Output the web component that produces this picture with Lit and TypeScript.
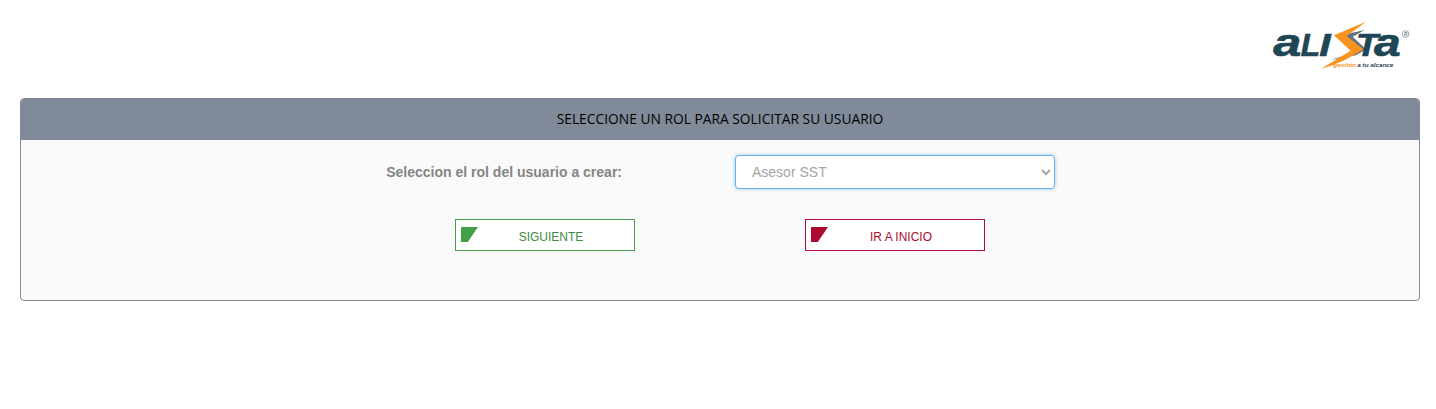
import { LitElement, html, css } from "lit";
import { customElement } from "lit/decorators.js";

@customElement("app-root")
export class AppRoot extends LitElement {
  static styles = css`
    :host { display: block; background: #fff; min-height: 409px; font-family: "Liberation Sans", Arial, sans-serif; }
    .top { display: flex; justify-content: flex-end; padding: 10px 10px 18px 0; }
    .logo { display: block; width: 170px; height: 70px; }
    .logo text { font-family: "Liberation Sans", Arial, sans-serif; font-weight: 700; font-style: italic; }
    .mark { stroke: #1f4656; stroke-width: 2px; fill: #1f4656; }
    .card { margin: 0 16px 0 20px; height: 203px; box-sizing: border-box; border: 1px solid #808a99; border-radius: 4px; background: #fafafa; overflow: hidden; }
    .head { height: 39px; padding-bottom: 2px; background: #808a99; color: #000; display: flex; align-items: center; justify-content: center; font: 400 13.8px "Open Sans", sans-serif; }
    .row { display: grid; grid-template-columns: 601px 320px; column-gap: 113px; align-items: center; margin-top: 15px; }
    label { text-align: right; font-size: 14px; font-weight: 700; color: #858585; }
    select { width: 320px; height: 34px; box-sizing: border-box; border: 1px solid #66afe9; border-radius: 4px; background: #fff; color: #a5a5a5; font: 14px "Liberation Sans", Arial, sans-serif; padding: 0 12px; box-shadow: 0 0 4px rgba(102, 175, 233, .6); outline: none; }
    .actions { display: flex; gap: 170px; margin: 30px 0 0 434px; }
    .btn { width: 180px; height: 32px; box-sizing: border-box; display: flex; background: #fff; border: 1px solid; padding: 0; font: 12px "Liberation Sans", Arial, sans-serif; }
    .ok { border-color: #43a047; color: #3d8b40; }
    .no { border-color: #b00b32; color: #ad0b30; }
    .flag { width: 17px; height: 15px; margin: 7px 0 0 5px; background: currentColor; clip-path: polygon(0 0, 100% 0, 40% 100%, 0 100%); }
    .ok .flag { color: #43a047; }
    .txt { flex: 1; text-align: center; padding: 10px 10px 0 0; }
  `;

  render() {
    return html`
      <div class="top">
        <svg class="logo" viewBox="0 0 510 210" aria-label="Alista">
          <text class="mark" x="52" y="138" font-size="118" textLength="84" lengthAdjust="spacingAndGlyphs">a</text>
          <text class="mark" x="134" y="138" font-size="92" textLength="58" lengthAdjust="spacingAndGlyphs">L</text>
          <text class="mark" x="190" y="138" font-size="92" textLength="34" lengthAdjust="spacingAndGlyphs">I</text>
          <path fill="#5f7480" d="M326 60 L262 74 L304 118 L262 138 L222 150 L300 136 L330 118 L290 80 Z"/>
          <path fill="#f7941d" d="M330 35 L234 76 L284 122 L195 176 C236 166 272 150 322 118 L272 78 Z"/>
          <text class="mark" x="300" y="138" font-size="92" textLength="66" lengthAdjust="spacingAndGlyphs">T</text>
          <text class="mark" x="354" y="138" font-size="118" textLength="80" lengthAdjust="spacingAndGlyphs">a</text>
          <text x="232" y="172" font-size="16" fill="#f7941d" textLength="68" lengthAdjust="spacingAndGlyphs">gestión</text>
          <text x="304" y="172" font-size="16" fill="#1f4656" textLength="108" lengthAdjust="spacingAndGlyphs">a tu alcance</text>
          <circle cx="449" cy="72" r="10" fill="none" stroke="#6d7f88" stroke-width="2"/>
          <text x="444" y="78" font-size="14" fill="#6d7f88">R</text>
        </svg>
      </div>
      <div class="card">
        <div class="head">SELECCIONE UN ROL PARA SOLICITAR SU USUARIO</div>
        <div class="row">
          <label for="rol">Seleccion el rol del usuario a crear:</label>
          <select id="rol"><option>Asesor SST</option></select>
        </div>
        <div class="actions">
          <button class="btn ok"><span class="flag"></span><span class="txt">SIGUIENTE</span></button>
          <button class="btn no"><span class="flag"></span><span class="txt">IR A INICIO</span></button>
        </div>
      </div>
    `;
  }
}
